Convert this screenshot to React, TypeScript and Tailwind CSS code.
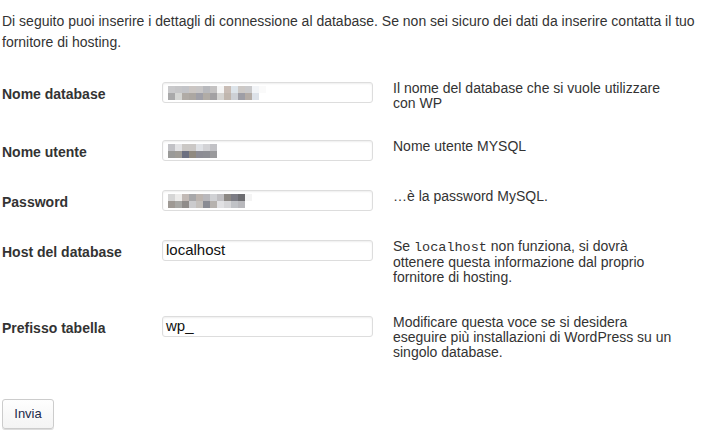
const FIELDS = [
  { label: "Nome database", value: "", blur: "db", rowH: "h-[58px]", desc: <>Il nome del database che si vuole utilizzare<br />con WP</> },
  { label: "Nome utente", value: "", blur: "user", rowH: "h-[50px]", desc: <>Nome utente MYSQL</> },
  { label: "Password", value: "", blur: "pass", rowH: "h-[50px]", desc: <>…è la password MySQL.</> },
  {
    label: "Host del database",
    value: "localhost",
    rowH: "h-[76px]",
    desc: (
      <>
        Se <code className="font-['Liberation_Mono',monospace] text-[13.5px]">localhost</code> non funziona, si dovrà<br />
        ottenere questa informazione dal proprio<br />
        fornitore di hosting.
      </>
    ),
  },
  {
    label: "Prefisso tabella",
    value: "wp_",
    rowH: "h-[76px]",
    desc: <>Modificare questa voce se si desidera<br />eseguire più installazioni di WordPress su un<br />singolo database.</>,
  },
];

// pixelated placeholder for the blurred-out values
const BLURS: Record<string, string[][]> = {
  db: [
    ["#c9c9cb", "#c6c6c8", "#c3c4c8", "#cbc6c3", "#c8c6c6", "#b8b9bd", "#c4c2c2", "#f5f5f5", "#c9bdb6", "#dde4ea", "#cdc9c6", "#cacacc", "#f2f4f7", "#fafafa", "#ffffff"],
    ["#a9a9aa", "#d5d6d4", "#b0aba6", "#aca7a2", "#a0a0a8", "#b1aca6", "#a3a1a3", "#d5d4d2", "#c0b6ae", "#cdd0d5", "#9e9ea6", "#b4aca6", "#dde2e9", "#ffffff", "#ffffff"],
  ],
  user: [
    ["#c2c2c6", "#e3e3e5", "#cbc8c5", "#cbc8c6", "#e0e2e6", "#d3d3d6", "#c2c2c6"],
    ["#9a9a98", "#9f9c96", "#6c7080", "#908a80", "#8c8c94", "#8d8e94", "#9a9a9c"],
  ],
  pass: [
    ["#d6d6d6", "#ecebea", "#c2bab6", "#a8a8aa", "#bdb5b0", "#b9b8bc", "#d0d1d4", "#c0bfc2", "#8c8884", "#7c7c84", "#6c6c70", "#f4f4f4"],
    ["#9e9994", "#a7a7a4", "#8f8c8a", "#cbcbcd", "#c4c0bc", "#8a8c94", "#b6b2ae", "#e1e1e3", "#d6d6d8", "#c0c2c6", "#b8b8bc", "#ffffff"],
  ],
};

function Blur({ id }: { id: string }) {
  return (
    <div className="flex flex-col">
      {BLURS[id].map((row, i) => (
        <div key={i} className="flex">
          {row.map((c, j) => (
            <div key={j} className="w-[7px] h-[7px]" style={{ background: c }} />
          ))}
        </div>
      ))}
    </div>
  );
}

export default function App() {
  return (
    <div className="w-[709px] h-[443px] bg-white text-[#333] font-['Liberation_Sans',Arial,sans-serif] text-[14px] pl-[2px] overflow-hidden">
      <p className="pt-[11px] leading-[21px] pr-[6px]">
        Di seguito puoi inserire i dettagli di connessione al database. Se non sei sicuro dei dati da inserire contatta il tuo fornitore di hosting.
      </p>

      <div className="mt-[19px] flex flex-col">
        {FIELDS.map((f) => (
          <div key={f.label} className={`flex items-start pt-[10px] ${f.rowH}`}>
            <div className="w-[160px] h-[21px] flex items-center font-bold pt-[3px]">{f.label}</div>
            <div className="w-[211px] h-[21px] border border-[#ddd] rounded-[3px] shadow-[inset_0_1px_2px_rgba(0,0,0,0.07)] flex items-center px-[3px] text-[15px] text-[#111] overflow-hidden">
              {f.blur ? <div className="pl-[2px]"><Blur id={f.blur} /></div> : f.value}
            </div>
            <div className="ml-[20px] -mt-[1px] leading-[15px]">{f.desc}</div>
          </div>
        ))}
      </div>

      <button className="mt-[17px] w-[52px] h-[30px] border border-[#ccc] rounded-[3px] bg-gradient-to-b from-[#fefefe] to-[#f4f4f4] shadow-[0_1px_0_#ddd] text-[13px] text-[#1c2a4a]">
        Invia
      </button>
    </div>
  );
}
